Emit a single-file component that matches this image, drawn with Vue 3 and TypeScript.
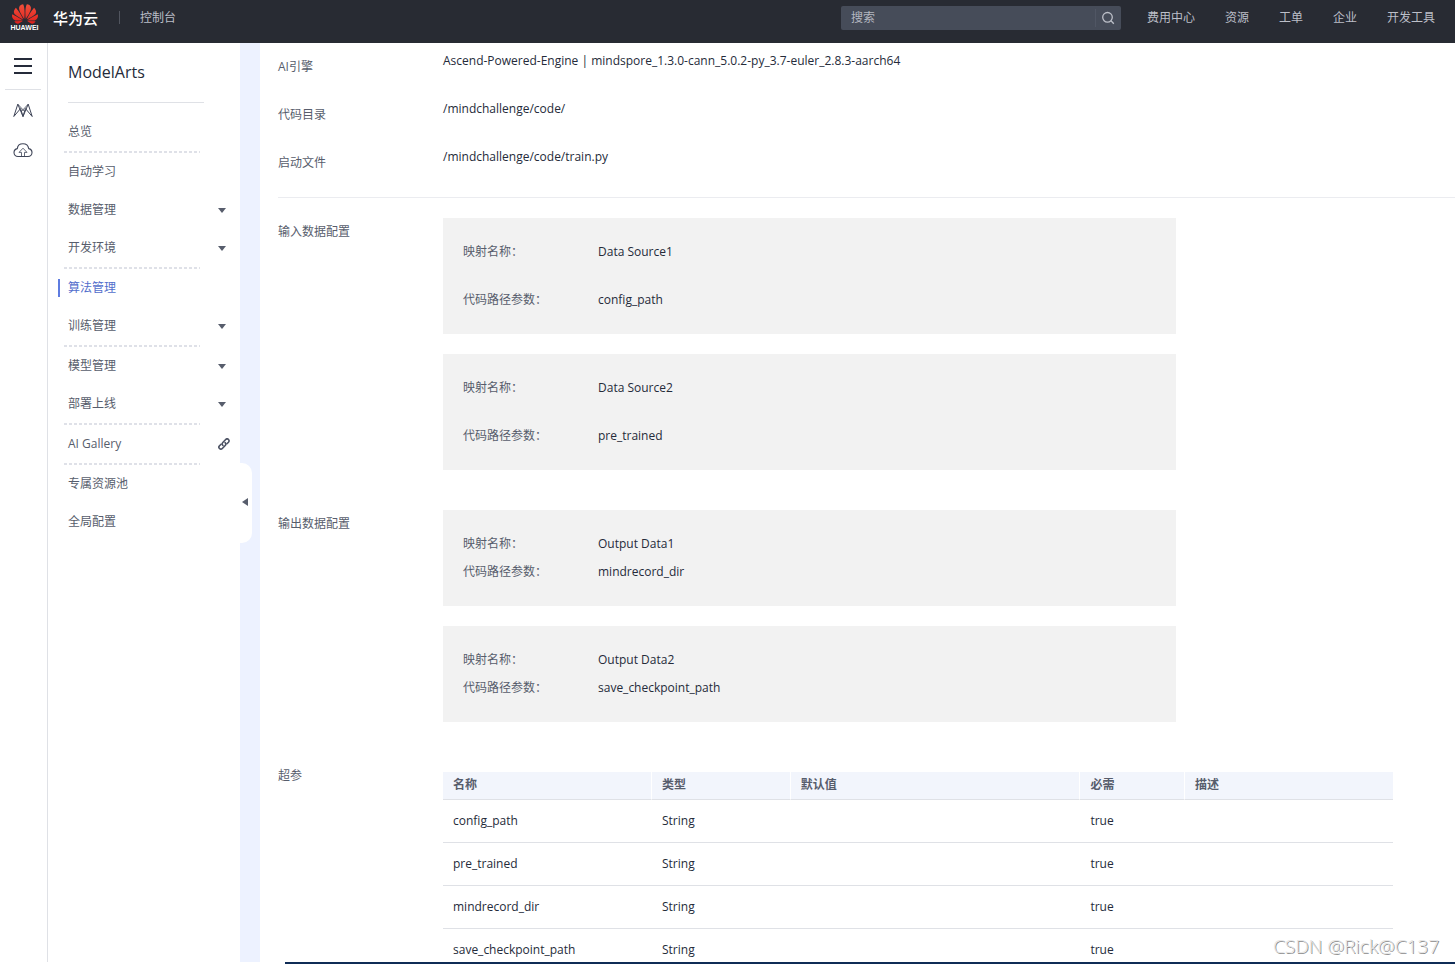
<script setup lang="ts">
interface NavItem {
  label: string
  icon?: 'caret' | 'link'
  active?: boolean
}
interface DataSource {
  name: string
  param: string
}

const topLinks: string[] = ['费用中心', '资源', '工单', '企业', '开发工具']

const navGroups: NavItem[][] = [
  [{ label: '总览' }],
  [{ label: '自动学习' }, { label: '数据管理', icon: 'caret' }, { label: '开发环境', icon: 'caret' }],
  [{ label: '算法管理', active: true }, { label: '训练管理', icon: 'caret' }],
  [{ label: '模型管理', icon: 'caret' }, { label: '部署上线', icon: 'caret' }],
  [{ label: 'AI Gallery', icon: 'link' }],
  [{ label: '专属资源池' }, { label: '全局配置' }],
]

const basics = [
  { label: 'AI引擎', value: 'Ascend-Powered-Engine | mindspore_1.3.0-cann_5.0.2-py_3.7-euler_2.8.3-aarch64' },
  { label: '代码目录', value: '/mindchallenge/code/' },
  { label: '启动文件', value: '/mindchallenge/code/train.py' },
]

const inputs: DataSource[] = [
  { name: 'Data Source1', param: 'config_path' },
  { name: 'Data Source2', param: 'pre_trained' },
]
const outputs: DataSource[] = [
  { name: 'Output Data1', param: 'mindrecord_dir' },
  { name: 'Output Data2', param: 'save_checkpoint_path' },
]

const columns: string[] = ['名称', '类型', '默认值', '必需', '描述']
const params: string[] = ['config_path', 'pre_trained', 'mindrecord_dir', 'save_checkpoint_path']
</script>

<template>
  <div class="page">
    <header class="topbar">
      <a class="brand" href="#">
        <span class="logo">
          <svg width="26" height="20" viewBox="0 2.9 24 18.2" aria-hidden="true">
            <defs>
              <linearGradient id="petal" x1="0" y1="0" x2="0" y2="1">
                <stop offset="0" stop-color="#f0503c" />
                <stop offset="1" stop-color="#e01f1c" />
              </linearGradient>
            </defs>
            <path
              fill="url(#petal)"
              d="M3.67 6.14S1.82 7.91 1.72 9.78v.35c.08 1.51 1.22 2.4 1.22 2.4 1.83 1.79 6.26 4.04 7.3 4.55 0 0 .06.03.1-.01l.02-.04v-.04C7.52 10.8 3.67 6.14 3.67 6.14zM9.65 18.6c-.02-.08-.1-.08-.1-.08l-7.38.26c.8 1.43 2.15 2.53 3.56 2.2.96-.25 3.16-1.78 3.88-2.3.06-.05.04-.09.04-.09zm.08-.78C6.49 15.63.21 12.28.21 12.28c-.15.46-.2.9-.21 1.3v.07c0 1.07.4 1.82.4 1.82.8 1.69 2.34 2.2 2.34 2.2.7.3 1.4.31 1.4.31.12.02 4.4 0 5.54 0 .05 0 .08-.05.08-.05v-.06c0-.03-.03-.05-.03-.05zM9.06 3.19a3.42 3.42 0 00-2.57 3.15v.41c.03.6.16 1.05.16 1.05.66 2.9 3.86 7.65 4.55 8.65.05.05.1.03.1.03a.1.1 0 00.06-.1c1.06-10.6-1.11-13.42-1.11-13.42-.32.02-1.19.23-1.19.23zm8.299 2.27s-.49-1.8-2.44-2.28c0 0-.57-.14-1.17-.22 0 0-2.18 2.81-1.12 13.43.01.07.06.08.06.08.07.03.1-.03.1-.03.72-1.03 3.9-5.76 4.55-8.64 0 0 .36-1.4.02-2.34zm-2.92 13.07s-.07 0-.09.05c0 0-.01.07.03.1.7.51 2.85 2 3.88 2.3 0 0 .16.05.43.06h.14c.69-.02 1.9-.37 3-2.26l-7.4-.25zm7.83-8.41c.14-2.06-1.94-3.97-1.94-3.98 0 0-3.85 4.66-6.67 10.8 0 0-.03.08.02.13l.04.01h.06c1.06-.53 5.46-2.77 7.28-4.54 0 0 1.15-.93 1.21-2.42zm1.52 2.14s-6.28 3.37-9.52 5.55c0 0-.05.04-.03.11 0 0 .03.06.07.06 1.16 0 5.56 0 5.67-.02 0 0 .57-.02 1.27-.29 0 0 1.56-.5 2.37-2.27 0 0 .73-1.45.17-3.14z"
            />
          </svg>
          <span class="logo-word">HUAWEI</span>
        </span>
        <span class="brand-name">华为云</span>
      </a>
      <a class="console" href="#">控制台</a>
      <form class="search" role="search" @submit.prevent>
        <input type="search" placeholder="搜索" aria-label="搜索" />
        <button type="submit" aria-label="提交搜索">
          <svg width="14" height="14" viewBox="0 0 14 14" fill="none" stroke="currentColor" stroke-width="1.3">
            <circle cx="6.5" cy="6.3" r="4.8" />
            <path d="M10 9.8L12.8 12.8" />
          </svg>
        </button>
      </form>
      <nav class="top-links">
        <a v-for="link in topLinks" :key="link" href="#">{{ link }}</a>
      </nav>
    </header>

    <div class="body">
      <aside class="rail">
        <button class="menu" type="button" aria-label="菜单"><i></i><i></i><i></i></button>
        <a href="#" aria-label="ModelArts">
          <svg width="20" height="16" viewBox="0 0 20 16" fill="none" stroke="#3f4558" stroke-width="1" stroke-linejoin="round">
            <path d="M.8 14.5L4.8 2.2L10 14.5L15.2 2.2L19.2 14.5L12.4 6.5L10 14.5L7.6 6.5Z" />
            <path d="M4.8 2.2L11.6 9.5M15.2 2.2L8.4 9.5" stroke-width=".8" />
          </svg>
        </a>
        <a href="#" aria-label="云上传">
          <svg width="20" height="16" viewBox="0 0 20 16" fill="none" stroke="#3f4558" stroke-width="1.1" stroke-linejoin="round">
            <path d="M5 14.5C2.6 14.5 1 12.8 1 10.6C1 8.5 2.5 7 4.3 6.6C4.6 3.6 7 1.7 10 1.7C13 1.7 15.2 3.6 15.7 6.6C17.6 7 19 8.5 19 10.6C19 12.8 17.4 14.5 15 14.5Z" />
            <path d="M8.5 14.2V10.4H6L10 6.2L14 10.4H11.5V14.2" stroke-width=".8" />
          </svg>
        </a>
      </aside>

      <aside class="sidebar">
        <h1>ModelArts</h1>
        <nav>
          <ul v-for="(group, g) in navGroups" :key="g">
            <li v-for="item in group" :key="item.label">
              <a href="#" :class="{ active: item.active }">
                <span>{{ item.label }}</span>
                <svg v-if="item.icon === 'caret'" class="caret" width="8" height="5" viewBox="0 0 8 5">
                  <path d="M0 0H8L4 5Z" fill="#575d6c" />
                </svg>
                <svg v-else-if="item.icon === 'link'" class="chain" width="12" height="12" viewBox="0 0 12 12" fill="none" stroke="#4c5263" stroke-width="1.6" stroke-linecap="round">
                  <path d="M4.9 7.4C4 6.5 4 5.3 4.8 4.5L7.7 1.5C8.5.7 9.7.7 10.5 1.5C11.3 2.3 11.3 3.4 10.5 4.2L8.9 5.8" />
                  <path d="M7.1 4.6C8 5.5 8 6.7 7.2 7.5L4.3 10.5C3.5 11.3 2.3 11.3 1.5 10.5C.7 9.7.7 8.6 1.5 7.8L3.1 6.2" />
                </svg>
              </a>
            </li>
          </ul>
        </nav>
        <button class="collapse" type="button" aria-label="收起">
          <svg width="6" height="8" viewBox="0 0 6 8"><path d="M6 0V8L0 4Z" fill="#575d6c" /></svg>
        </button>
      </aside>

      <main class="content">
        <dl class="basics">
          <div v-for="row in basics" :key="row.label" class="row">
            <dt>{{ row.label }}</dt>
            <dd>{{ row.value }}</dd>
          </div>
        </dl>

        <section class="row">
          <h2>输入数据配置</h2>
          <div class="cards">
            <dl v-for="source in inputs" :key="source.name" class="card roomy">
              <div><dt>映射名称：</dt><dd>{{ source.name }}</dd></div>
              <div><dt>代码路径参数：</dt><dd>{{ source.param }}</dd></div>
            </dl>
          </div>
        </section>

        <section class="row">
          <h2>输出数据配置</h2>
          <div class="cards">
            <dl v-for="source in outputs" :key="source.name" class="card">
              <div><dt>映射名称：</dt><dd>{{ source.name }}</dd></div>
              <div><dt>代码路径参数：</dt><dd>{{ source.param }}</dd></div>
            </dl>
          </div>
        </section>

        <section class="row">
          <h2>超参</h2>
          <div class="table-wrap">
            <table>
              <thead>
                <tr>
                  <th v-for="column in columns" :key="column" scope="col">{{ column }}</th>
                </tr>
              </thead>
              <tbody>
                <tr v-for="param in params" :key="param">
                  <td>{{ param }}</td>
                  <td>String</td>
                  <td></td>
                  <td>true</td>
                  <td></td>
                </tr>
              </tbody>
            </table>
          </div>
        </section>
      </main>
    </div>
    <div class="bottom-strip"></div>
    <span class="watermark">CSDN @Rick@C137</span>
  </div>
</template>

<style>
body {
  margin: 0;
}
</style>

<style scoped>
.page {
  position: relative;
  display: flex;
  flex-direction: column;
  height: 100vh;
  overflow: hidden;
  background: #fff;
  color: #252b3a;
  font: 12px/18px "Open Sans", "Noto Sans CJK SC", sans-serif;
}
.page * {
  box-sizing: border-box;
}
a {
  color: inherit;
  text-decoration: none;
}
button {
  padding: 0;
  border: 0;
  background: none;
  cursor: pointer;
}
ul,
dl,
dd,
h1,
h2 {
  margin: 0;
  padding: 0;
  list-style: none;
  font-weight: 400;
}
svg {
  display: block;
}

.topbar {
  display: flex;
  align-items: center;
  flex: none;
  height: 43px;
  padding: 0 20px 8px 11px;
  background: #282b33;
  color: #bcbfc8;
}
.brand {
  display: flex;
  align-items: center;
  gap: 15px;
}
.logo {
  display: flex;
  flex-direction: column;
  align-items: center;
  width: 27px;
}
.logo-word {
  color: #fff;
  font: bold 7px/8px "Liberation Sans", sans-serif;
}
.brand-name {
  color: #fff;
  font-size: 15px;
  font-weight: 500;
}
.console {
  margin-left: 21px;
  padding-left: 20px;
  border-left: 1px solid #51555f;
  line-height: 13px;
}
.search {
  display: flex;
  align-items: center;
  width: 280px;
  height: 24px;
  margin-left: auto;
  border-radius: 2px;
  background: #464c59;
}
.search input {
  flex: 1;
  min-width: 0;
  padding: 0 10px;
  border: 0;
  background: none;
  color: #bcbfc8;
  font: inherit;
  outline: 0;
}
.search input::placeholder {
  color: #b4b7c0;
}
.search button {
  display: flex;
  align-items: center;
  justify-content: center;
  width: 26px;
  height: 18px;
  border-left: 1px solid #505664;
  color: #bcbfc8;
}
.top-links {
  display: flex;
  gap: 30px;
  margin-left: 26px;
}

.body {
  display: flex;
  flex: 1;
  min-height: 0;
}
.rail {
  display: flex;
  flex-direction: column;
  align-items: center;
  gap: 24px;
  width: 48px;
  flex: none;
  padding-right: 1px;
  border-right: 1px solid #dfe1e6;
}
.menu {
  display: flex;
  flex-direction: column;
  align-items: center;
  gap: 5px;
  width: 36px;
  height: 47px;
  margin-bottom: -12px;
  padding-top: 15px;
  border-bottom: 1px solid #dfe1e6;
}
.menu i {
  width: 18px;
  height: 2px;
  background: #252b3a;
}

.sidebar {
  position: relative;
  width: 192px;
  flex: none;
  padding: 0 0 0 10px;
}
.sidebar h1 {
  margin: 0 36px 10px 10px;
  padding: 18px 0;
  border-bottom: 1px solid #dfe1e6;
  font-size: 16px;
  line-height: 23px;
}
.sidebar ul + ul::before {
  content: "";
  display: block;
  height: 2px;
  margin: 0 40px 0 6px;
  background: repeating-linear-gradient(90deg, #dfe1e8 0 3px, transparent 3px 5px);
}
.sidebar li {
  display: flex;
  align-items: center;
  height: 38px;
}
.sidebar li a {
  display: flex;
  align-items: center;
  justify-content: space-between;
  flex: 1;
  padding: 0 14px 0 8px;
  border-left: 2px solid transparent;
  color: #575d6c;
}
.sidebar li a.active {
  border-color: #5e7ce0;
  color: #526ecc;
}
.chain {
  margin-right: -4px;
}
.collapse {
  position: absolute;
  top: 420px;
  left: 100%;
  z-index: 1;
  display: flex;
  align-items: center;
  justify-content: center;
  width: 12px;
  height: 80px;
  padding: 0 2px 2px 0;
  border-radius: 0 10px 10px 0;
  background: #fff;
}

.content {
  flex: 1;
  min-width: 0;
  overflow: hidden;
  padding-left: 18px;
  border-left: 20px solid #edf2ff;
}
.row {
  display: grid;
  grid-template-columns: 165px 1fr;
}
.row > dt,
.row > h2 {
  color: #575d6c;
  font-size: 12px;
}
.basics {
  margin-bottom: 20px;
  padding: 9px 0 1px;
  border-bottom: 1px solid #ebecf0;
}
.basics .row {
  height: 48px;
}
.basics dt {
  padding-top: 6px;
}
.row > h2 {
  padding-top: 5px;
}
.cards {
  display: grid;
  gap: 20px;
  margin: 0 279px 40px 0;
}
.card {
  display: grid;
  gap: 10px;
  padding: 25px 20px;
  background: #f2f2f2;
}
.card.roomy {
  gap: 30px;
}
.card div {
  display: grid;
  grid-template-columns: 135px 1fr;
}
.card dt {
  color: #575d6c;
}
.table-wrap {
  margin: 10px 62px 0 0;
}
table {
  width: 100%;
  border-collapse: separate;
  border-spacing: 0;
  table-layout: fixed;
}
th,
td {
  padding: 0 10px;
  border-bottom: 1px solid #dfe1e6;
  text-align: left;
}
th {
  height: 28px;
  padding-bottom: 1px;
  background: #f2f5fc;
  color: #575d6c;
  font-weight: 700;
}
th:not(:last-child) {
  border-right: 1px solid #fff;
}
td {
  height: 43px;
}
th:nth-child(1) {
  width: 22%;
}
th:nth-child(2) {
  width: 14.6%;
}
th:nth-child(3) {
  width: 30.5%;
}
th:nth-child(4) {
  width: 11%;
}

.bottom-strip {
  flex: none;
  height: 2px;
  margin-left: 285px;
  background: #0f2c56;
}
.watermark {
  position: absolute;
  right: 16px;
  bottom: 5px;
  color: #e4e4e4;
  font-size: 19px;
  font-weight: 300;
  line-height: 26px;
  text-shadow: 1px 1px 0 #8a8a8a;
}
</style>
